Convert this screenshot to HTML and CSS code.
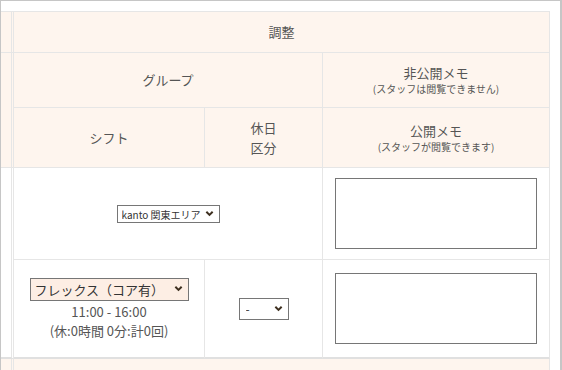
FILE: index.html
```html
<!DOCTYPE html>
<html lang="ja">
<head>
    <meta charset="UTF-8">
    <meta name="viewport" content="width=device-width, initial-scale=1.0">
    <title>調整</title>
    <link rel="stylesheet" href="styles.css">
</head>
<body>

    <div class="frame">
        <table class="shift-table">
            <colgroup>
                <col class="col-side">
                <col class="col-shift">
                <col class="col-day">
                <col class="col-memo">
            </colgroup>
            <tbody>
                <tr class="head row-title">
                    <td class="side"></td>
                    <th colspan="3">調整</th>
                </tr>
                <tr class="head row-group">
                    <td class="side" rowspan="2"></td>
                    <th colspan="2">グループ</th>
                    <th>非公開メモ<small>(スタッフは閲覧できません)</small></th>
                </tr>
                <tr class="head row-shift">
                    <th>シフト</th>
                    <th class="two-line">休日<br>区分</th>
                    <th>公開メモ<small>(スタッフが閲覧できます)</small></th>
                </tr>
                <tr class="row-area">
                    <td class="side side-body" rowspan="2"></td>
                    <td colspan="2">
                        <span class="select">
                            <select class="select-area">
                                <option>kanto 関東エリア</option>
                            </select>
                            <svg class="chevron" viewBox="0 0 10 7"><path d="M1.5 1.5 L5 5 L8.5 1.5"/></svg>
                        </span>
                    </td>
                    <td class="memo"><textarea></textarea></td>
                </tr>
                <tr class="row-day">
                    <td>
                        <span class="select">
                            <select class="select-shift">
                                <option>フレックス（コア有）</option>
                            </select>
                            <svg class="chevron" viewBox="0 0 10 7"><path d="M1.5 1.5 L5 5 L8.5 1.5"/></svg>
                        </span>
                        <div class="shift-time">11:00 - 16:00</div>
                        <div class="shift-break">(休:0時間 0分:計0回)</div>
                    </td>
                    <td>
                        <span class="select">
                            <select class="select-day">
                                <option>-</option>
                            </select>
                            <svg class="chevron" viewBox="0 0 10 7"><path d="M1.5 1.5 L5 5 L8.5 1.5"/></svg>
                        </span>
                    </td>
                    <td class="memo"><textarea></textarea></td>
                </tr>
                <tr class="head row-next">
                    <td class="side"></td>
                    <th colspan="3"></th>
                </tr>
            </tbody>
        </table>
    </div>

</body>
</html>
```

FILE: styles.css
```css
body {
    margin: 0;
    overflow: hidden;
    font-family: "Noto Sans CJK JP", "Noto Sans", sans-serif;
    color: #555;
}
.frame {
    width: 562px;
    height: 370px;
    overflow: hidden;
    box-sizing: border-box;
    border-left: 1px solid #c6c6c6;
    border-top: 1px solid #c6c6c6;
    border-right: 2px solid #c6c6c6;
    padding-top: 10px;
    background-color: #fff;
}
.shift-table {
    border-collapse: separate;
    border-spacing: 0;
    table-layout: fixed;
    width: 549px;
    border-top: 1px solid #e6e6e6;
}
.col-side {
    width: 13px;
}
.col-shift {
    width: 191px;
}
.col-day {
    width: 118px;
}
.col-memo {
    width: 227px;
}
th, td {
    box-sizing: border-box;
    padding: 0;
    border-right: 1px solid #e6e6e6;
    border-bottom: 1px solid #e6e6e6;
    text-align: center;
    vertical-align: middle;
    font-size: 13px;
    font-weight: normal;
    line-height: 18px;
}
.head th, .head td {
    background-color: #fef5ee;
}
td.side {
    border-right: 3px double #e6e6e6;
}
td.side-body {
    background-color: #fff;
    border-bottom: 2px solid #e0e0e0;
}
th small {
    display: block;
    font-size: 10px;
    line-height: 14px;
}
th.two-line {
    line-height: 20px;
}
.row-title th, .row-title td {
    height: 41px;
}
.row-group th, .row-group td {
    height: 55px;
}
.row-shift th {
    height: 60px;
}
.row-area td {
    height: 92px;
}
.row-day td {
    height: 99px;
    border-bottom: 2px solid #e0e0e0;
}
.row-next th, .row-next td {
    height: 30px;
}
td.memo {
    padding: 0 12px;
}
td.memo textarea {
    display: block;
    width: 100%;
    height: 71px;
    box-sizing: border-box;
    margin: 0;
    border: 1px solid #767676;
    resize: none;
    background-color: #fff;
}
.select {
    position: relative;
    display: inline-block;
    vertical-align: middle;
}
.select select {
    appearance: none;
    -webkit-appearance: none;
    display: block;
    box-sizing: border-box;
    margin: 0;
    border: 1px solid #767676;
    border-radius: 0;
    font-family: "Noto Sans CJK JP", "Noto Sans", sans-serif;
    color: #333;
    background-color: #fff;
    text-align: left;
}
.select .chevron {
    position: absolute;
    right: 6px;
    top: 50%;
    width: 9px;
    height: 7px;
    margin-top: -4px;
    fill: none;
    stroke: #3e3020;
    stroke-width: 2.2;
    pointer-events: none;
}
.select-area {
    width: 103px;
    height: 18px;
    padding: 0 18px 0 4px;
    font-size: 10px;
}
.select-shift {
    width: 159px;
    height: 23px;
    padding: 0 22px 0 4px;
    font-size: 13px;
    background-color: #fdeee4 !important;
}
.select-day {
    width: 50px;
    height: 22px;
    padding: 0 20px 0 6px;
    font-size: 12px;
}
.shift-time, .shift-break {
    font-size: 13px;
    line-height: 19px;
}
.shift-time {
    margin-top: 1px;
}
```
